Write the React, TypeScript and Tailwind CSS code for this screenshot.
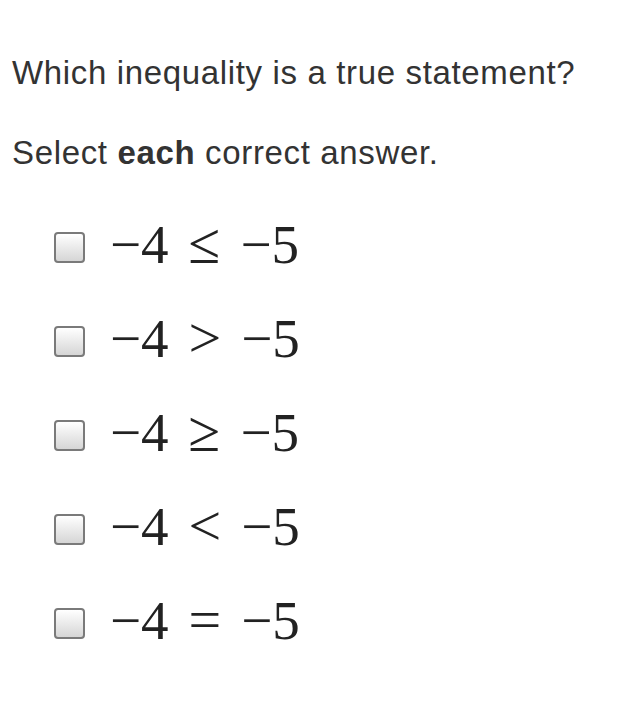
const OPTIONS: [string, string][] = [
  ["\u2264", "le"],
  [">", "gt"],
  ["\u2265", "ge"],
  ["<", "lt"],
  ["=", "eq"],
];

export default function App() {
  return (
    <div className="h-[717px] w-[624px] bg-white pl-3 pt-[52px] text-[#333]">
      <p className="font-['Liberation_Sans',Arial,sans-serif] text-[33px] leading-[42px] tracking-[0.65px]">
        Which inequality is a true statement?
      </p>
      <p className="mt-[38px] font-['Liberation_Sans',Arial,sans-serif] text-[33px] leading-[42px] tracking-[0.65px]">
        Select <b className="font-bold">each</b> correct answer.
      </p>
      <ul className="mt-[26px] flex flex-col">
        {OPTIONS.map(([op, k]) => (
          <li key={k} className="flex h-[94px] items-center pl-[42px]">
            <span className="h-[31px] w-[31px] shrink-0 rounded-[4px] border-2 border-[#7a7a7a] bg-gradient-to-b from-white to-[#d6d6d6]" />
            <span className="mb-[6px] ml-[25px] flex items-baseline gap-[20px] font-['Liberation_Serif','Times_New_Roman',serif] text-[55px] leading-none text-[#222]">
              <span>{"\u22124"}</span>
              <span className="text-[58px]">{op}</span>
              <span>{"\u22125"}</span>
            </span>
          </li>
        ))}
      </ul>
    </div>
  );
}
